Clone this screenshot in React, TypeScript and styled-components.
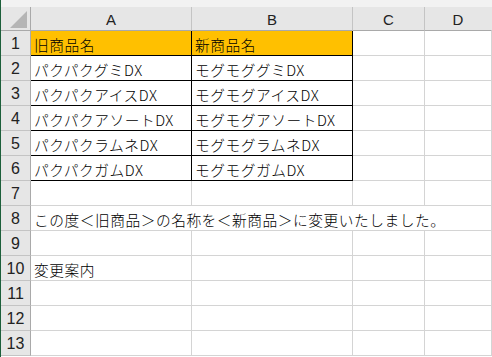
import React from "react";
import styled, { createGlobalStyle } from "styled-components";

const GlobalStyle = createGlobalStyle`
  html, body {
    margin: 0;
    padding: 0;
    background: #ffffff;
  }
  body {
    font-family: "Noto Sans CJK JP", "Noto Sans", sans-serif;
  }
`;

const columns = ["A", "B", "C", "D"];

const rows: { a?: string; b?: string; wide?: string; table?: boolean; head?: boolean }[] = [
  { a: "旧商品名", b: "新商品名", table: true, head: true },
  { a: "パクパクグミDX", b: "モグモググミDX", table: true },
  { a: "パクパクアイスDX", b: "モグモグアイスDX", table: true },
  { a: "パクパクアソートDX", b: "モグモグアソートDX", table: true },
  { a: "パクパクラムネDX", b: "モグモグラムネDX", table: true },
  { a: "パクパクガムDX", b: "モグモグガムDX", table: true },
  {},
  { wide: "この度＜旧商品＞の名称を＜新商品＞に変更いたしました。" },
  {},
  { a: "変更案内" },
  {},
  {},
  {},
];

function App() {
  return (
    <>
      <GlobalStyle />
      <Window>
        <Edge />
        <Sheet>
          <TopStrip />
          <Grid>
            <Corner>
              <svg width="17" height="17" viewBox="0 0 17 17">
                <polygon points="17,0 17,17 0,17" fill="#b5b5b5" />
              </svg>
            </Corner>
            {columns.map((c, i) => (
              <ColHead key={c} $last={i === columns.length - 1}>
                {c}
              </ColHead>
            ))}
            {rows.map((r, i) => (
              <React.Fragment key={i}>
                <RowHead>{i + 1}</RowHead>
                {r.wide ? (
                  <Cell $span={4}>{r.wide}</Cell>
                ) : (
                  <>
                    <Cell $table={r.table} $fill={r.head ? "#ffc000" : undefined}>
                      {r.a}
                    </Cell>
                    <Cell $table={r.table} $fill={r.head ? "#ffc000" : undefined}>
                      {r.b}
                    </Cell>
                    <Cell />
                    <Cell />
                  </>
                )}
              </React.Fragment>
            ))}
          </Grid>
        </Sheet>
      </Window>
    </>
  );
}

export default App;

const Window = styled.div`
  display: flex;
  width: 492px;
  height: 357px;
  overflow: hidden;
  background: #ffffff;
`;

const Edge = styled.div`
  width: 1px;
  flex-shrink: 0;
  background: #1d5f3a;
`;

const Sheet = styled.div`
  flex: 1;
  display: flex;
  flex-direction: column;
`;

const TopStrip = styled.div`
  height: 7px;
  background: #f2f2f2;
`;

const Grid = styled.div`
  display: grid;
  grid-template-columns: 30px 161px 161px 72px 1fr;
  grid-template-rows: 24px repeat(13, 25px);
  font-size: 14.7px;
  font-weight: 300;
  color: #000000;
`;

const Corner = styled.div`
  display: flex;
  align-items: flex-end;
  justify-content: flex-end;
  padding: 0 3px 2px 0;
  background: #e6e6e6;
  border-right: 1px solid #a9a9a9;
  border-bottom: 1px solid #a9a9a9;
`;

const ColHead = styled.div<{ $last?: boolean }>`
  display: flex;
  align-items: center;
  justify-content: center;
  background: #e6e6e6;
  border-right: 1px solid ${({ $last }) => ($last ? "transparent" : "#c4c4c4")};
  border-bottom: 1px solid #a9a9a9;
  font-family: "Liberation Sans", "Noto Sans", sans-serif;
  font-weight: 400;
  font-size: 15px;
  color: #222222;
  padding-top: 2px;
`;

const RowHead = styled.div`
  display: flex;
  align-items: center;
  justify-content: center;
  background: #e6e6e6;
  border-right: 1px solid #a9a9a9;
  border-bottom: 1px solid #c4c4c4;
  font-family: "Liberation Sans", "Noto Sans", sans-serif;
  font-weight: 400;
  font-size: 16px;
  color: #222222;
  padding-top: 2px;
`;

const Cell = styled.div<{ $table?: boolean; $fill?: string; $span?: number }>`
  grid-column: span ${({ $span }) => $span || 1};
  display: flex;
  align-items: center;
  padding: 2px 0 0 3px;
  white-space: nowrap;
  overflow: visible;
  background: ${({ $fill }) => $fill || "transparent"};
  border-right: 1px solid ${({ $table }) => ($table ? "#000000" : "#d4d4d4")};
  border-bottom: 1px solid ${({ $table }) => ($table ? "#000000" : "#d4d4d4")};
  letter-spacing: 0.55px;
`;
